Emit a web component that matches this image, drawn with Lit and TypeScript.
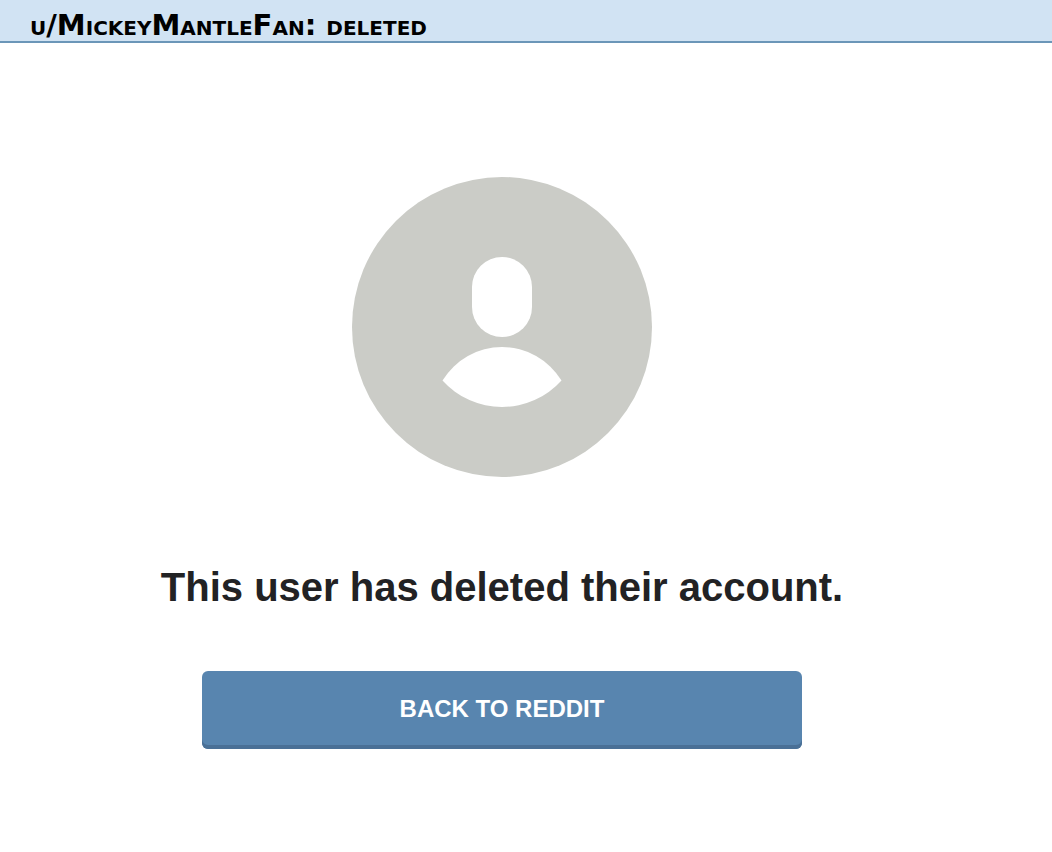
import { LitElement, html, css } from "lit";
import { customElement, property } from "lit/decorators.js";

@customElement("app-root")
export class AppRoot extends LitElement {
  @property() username = "MickeyMantleFan";

  static styles = css`
    :host {
      display: block;
      min-height: 100vh;
      background: #fff;
      color: #222224;
      font-family: "Liberation Sans", Arial, sans-serif;
    }
    .bar {
      padding: 9px 30px 0;
      background: #d1e3f3;
      border-bottom: 2px solid #6b96b8;
    }
    .name {
      margin: 0;
      color: #000;
      font: bold 29px/32px "DejaVu Sans", Verdana, sans-serif;
      font-variant: small-caps;
    }
    .content {
      display: flex;
      flex-direction: column;
      align-items: center;
      padding: 134px 72px 100px 24px;
    }
    .avatar {
      display: block;
      width: 300px;
      height: 300px;
    }
    .message {
      margin: 86px 0 0;
      font-size: 40px;
      line-height: 48px;
      text-align: center;
    }
    .back {
      box-sizing: border-box;
      width: 100%;
      max-width: 600px;
      margin-top: 60px;
      padding: 22px 20px 24px;
      border-radius: 6px;
      background: #5885af;
      box-shadow: inset 0 -4px #4a7096;
      color: #fff;
      font-size: 24px;
      line-height: 32px;
      font-weight: bold;
      text-align: center;
      text-decoration: none;
      text-transform: uppercase;
    }
  `;

  render() {
    return html`
      <header class="bar">
        <h1 class="name">u/${this.username}: deleted</h1>
      </header>
      <main class="content">
        <svg class="avatar" viewBox="0 0 300 300" aria-hidden="true">
          <circle cx="150" cy="150" r="150" fill="#cbccc7" />
          <rect x="120" y="80" width="60" height="80" rx="30" fill="#fff" />
          <path d="M90.500 203.500A69.700 69.700 0 0 1 209.500 203.500A80 80 0 0 1 90.500 203.500z" fill="#fff" />
        </svg>
        <h2 class="message">This user has deleted their account.</h2>
        <a class="back" href="/">Back to reddit</a>
      </main>
    `;
  }
}
